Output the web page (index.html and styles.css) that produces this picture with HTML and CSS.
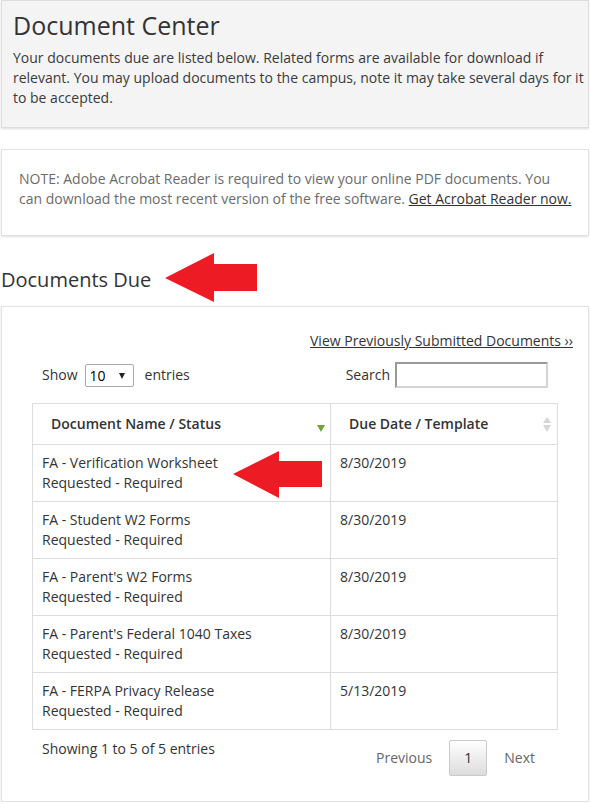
FILE: index.html
```html
<!DOCTYPE html>
<html lang="en">
<head>
<meta charset="utf-8">
<title>Document Center</title>
<link rel="stylesheet" href="styles.css">
</head>
<body>
<div class="page">
  <section class="intro-box">
    <h1 class="intro-title">Document Center</h1>
    <p class="intro-text">Your documents due are listed below. Related forms are available for download if relevant. You may upload documents to the campus, note it may take several days for it to be accepted.</p>
  </section>

  <section class="note-box">
    <p class="note-text">NOTE: Adobe Acrobat Reader is required to view your online PDF documents. You can download the most recent version of the free software. <a class="note-link" href="#">Get Acrobat Reader now.</a></p>
  </section>

  <h2 class="section-title">Documents Due</h2>

  <section class="docs-panel">
    <div class="prev-link-row"><a class="prev-link" href="#">View Previously Submitted Documents &rsaquo;&rsaquo;</a></div>
    <div class="docs-inner">
      <div class="controls">
        <label class="length-ctl">Show <span class="fake-select"><span class="fake-select-value">10</span><span class="fake-select-arrow"></span></span> entries</label>
        <label class="search-ctl">Search <input class="search-input" type="text"></label>
      </div>
      <table class="docs-table">
        <thead>
          <tr>
            <th class="col-name"><div class="th-inner"><span>Document Name / Status</span><span class="sort-desc"></span></div></th>
            <th class="col-date"><div class="th-inner"><span>Due Date / Template</span><span class="sort-both"><span class="sb-up"></span><span class="sb-down"></span></span></div></th>
          </tr>
        </thead>
        <tbody>
          <tr><td>FA - Verification Worksheet<br>Requested - Required</td><td>8/30/2019</td></tr>
          <tr><td>FA - Student W2 Forms<br>Requested - Required</td><td>8/30/2019</td></tr>
          <tr><td>FA - Parent's W2 Forms<br>Requested - Required</td><td>8/30/2019</td></tr>
          <tr><td>FA - Parent's Federal 1040 Taxes<br>Requested - Required</td><td>8/30/2019</td></tr>
          <tr><td>FA - FERPA Privacy Release<br>Requested - Required</td><td>5/13/2019</td></tr>
        </tbody>
      </table>
      <div class="table-footer">
        <div class="table-info">Showing 1 to 5 of 5 entries</div>
        <div class="pager">
          <a class="pager-btn pager-disabled" href="#">Previous</a>
          <a class="pager-btn pager-current" href="#">1</a>
          <a class="pager-btn pager-disabled" href="#">Next</a>
        </div>
      </div>
    </div>
  </section>

  <svg class="arrow arrow-one" width="100" height="56" viewBox="0 0 100 56" aria-hidden="true">
    <polygon points="5,28 54,3 54,14 97,14 97,41 54,41 54,52" fill="#ed1c24"/>
  </svg>
  <svg class="arrow arrow-two" width="96" height="53" viewBox="0 0 96 53" aria-hidden="true">
    <polygon points="5,26 51,3 51,13 94,13 94,39 51,39 51,50" fill="#ed1c24"/>
  </svg>
</div>
</body>
</html>
```

FILE: styles.css
```css
* { box-sizing: border-box; }

html, body {
  margin: 0;
  padding: 0;
  background: #fff;
}

body {
  font-family: "Open Sans", "Liberation Sans", sans-serif;
  font-size: 14px;
  line-height: 20px;
  color: #333;
}

.page {
  position: relative;
  padding: 0 1px;
  width: 590px;
}

.intro-box {
  background: #f4f4f4;
  border: 1px solid #dedede;
  box-shadow: 0 1px 2px rgba(0, 0, 0, 0.14);
  padding: 8px 4px 19px 11px;
}

.intro-title {
  margin: 0 0 7px;
  font-size: 25px;
  line-height: 32px;
  font-weight: 400;
  color: #333;
}

.intro-text {
  margin: 0;
  color: #3a3a3a;
}

.note-box {
  margin-top: 21px;
  background: #fff;
  border: 1px solid #e2e2e2;
  box-shadow: 0 1px 2px rgba(0, 0, 0, 0.12);
  padding: 19px 12px 26px 17px;
}

.note-text {
  margin: 0;
  color: #6b6b6b;
}

.note-link {
  color: #333;
  text-decoration: underline;
}

.section-title {
  margin: 30px 0 12px;
  font-size: 20px;
  line-height: 28px;
  font-weight: 400;
  color: #333;
}

.docs-panel {
  background: #fff;
  border: 1px solid #e2e2e2;
  box-shadow: 0 1px 2px rgba(0, 0, 0, 0.12);
  padding: 24px 15px 25px;
}

.prev-link-row {
  display: flex;
  justify-content: flex-end;
}

.prev-link {
  color: #333;
  text-decoration: underline;
}

.docs-inner {
  padding: 0 15px;
}

.controls {
  display: flex;
  justify-content: space-between;
  align-items: center;
  margin-top: 11px;
  padding: 0 10px;
  height: 26px;
}

.length-ctl, .search-ctl {
  display: flex;
  align-items: center;
  color: #333;
}

.fake-select {
  position: relative;
  display: inline-block;
  width: 49px;
  height: 23px;
  margin: 0 11px 0 7px;
  border: 1px solid #aaa;
  border-radius: 2px;
  background: #fff;
  line-height: 21px;
  padding-left: 4px;
  color: #000;
}

.fake-select-arrow {
  position: absolute;
  right: 8px;
  top: 8px;
  width: 0;
  height: 0;
  border-left: 3.5px solid transparent;
  border-right: 3.5px solid transparent;
  border-top: 6px solid #222;
}

.search-input {
  width: 153px;
  height: 26px;
  margin: 0 0 0 5px;
  padding: 1px 3px;
  border: 2px solid;
  border-color: #999 #d4d4d4 #d4d4d4 #999;
  background: #fff;
  font: inherit;
}

.docs-table {
  margin-top: 15px;
  width: 100%;
  border-collapse: collapse;
}

.docs-table th,
.docs-table td {
  border: 1px solid #ddd;
  text-align: left;
  vertical-align: top;
}

.docs-table th {
  font-weight: 600;
  padding: 10px 5px 10px 18px;
  color: #333;
}

.col-name { width: 298px; }

.th-inner {
  display: flex;
  justify-content: space-between;
  align-items: center;
}

.sort-desc {
  width: 0;
  height: 0;
  margin-top: 8px;
  border-left: 4.5px solid transparent;
  border-right: 4.5px solid transparent;
  border-top: 7px solid #72a336;
}

.sort-both {
  display: flex;
  flex-direction: column;
  align-items: center;
  gap: 2px;
  margin-right: 1px;
}

.sb-up, .sb-down {
  width: 0;
  height: 0;
  border-left: 4px solid transparent;
  border-right: 4px solid transparent;
}

.sb-up { border-bottom: 6px solid #d6d6d6; }
.sb-down { border-top: 7px solid #d6d6d6; }

.docs-table td {
  padding: 8px 9px;
  color: #333;
}

.table-footer {
  display: flex;
  justify-content: space-between;
  align-items: flex-start;
  padding: 0 8px 0 10px;
}

.table-info {
  padding-top: 9px;
  color: #333;
}

.pager {
  display: flex;
  padding-top: 10px;
}

.pager-btn {
  display: block;
  padding: 7px 14px;
  margin-left: 2px;
  border: 1px solid transparent;
  border-radius: 2px;
  color: #666;
  text-decoration: none;
}

.pager-current {
  color: #333;
  border-color: #c9c9c9;
  background: linear-gradient(to bottom, #fff 0%, #dcdcdc 100%);
}

.arrow {
  position: absolute;
  display: block;
}

.arrow-one { left: 160px; top: 250px; }
.arrow-two { left: 228px; top: 448px; }
```
